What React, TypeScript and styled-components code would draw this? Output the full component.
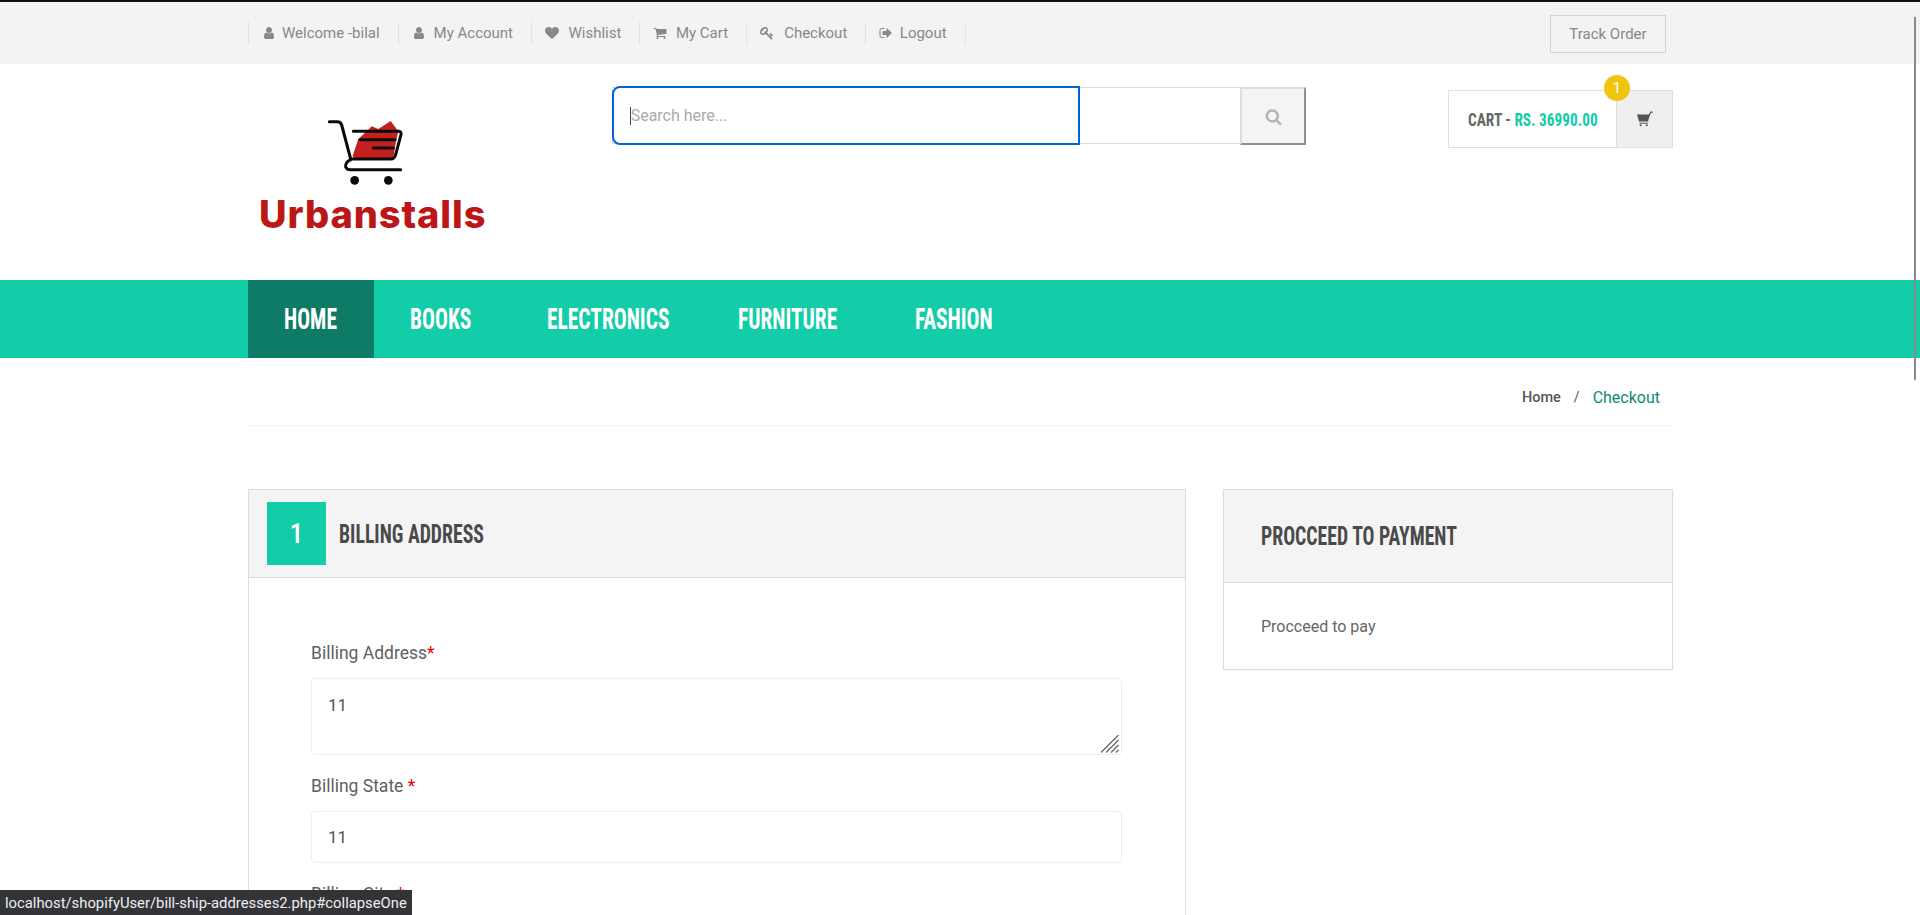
import styled, { createGlobalStyle } from "styled-components";

const GlobalStyle = createGlobalStyle`
  html, body {
    margin: 0;
    padding: 0;
    height: 915px;
    overflow: hidden;
    background: #fff;
    font-family: Roboto, "Liberation Sans", sans-serif;
    color: #555;
  }
  * { box-sizing: border-box; }
`;

const headingFont = `"Roboto Condensed", Roboto, "Liberation Sans", sans-serif`;

const Page = styled.div`
  position: relative;
  height: 915px;
  overflow: hidden;
  border-top: 2px solid #111;
`;

const Container = styled.div`
  width: 1425px;
  margin-left: 248px;
`;

// the heading face of the original is much narrower than anything installed
const Squeeze = styled.span<{ $x: number }>`
  display: inline-block;
  transform: scaleX(${(p) => p.$x});
  transform-origin: left center;
  white-space: nowrap;
`;

const TopBar = styled.div`
  height: 62px;
  background: #f3f3f3;
`;

const TopInner = styled(Container)`
  display: flex;
  align-items: center;
  justify-content: space-between;
  height: 100%;
  padding-right: 7px;
`;

const TopLinks = styled.ul`
  display: flex;
  list-style: none;
  margin: 0;
  padding: 0;
  border-right: 1px solid #e2e2e2;
`;

const TopLink = styled.li<{ $gap: number }>`
  display: flex;
  align-items: center;
  gap: ${(p) => p.$gap}px;
  height: 23px;
  padding: 0 18px 0 13px;
  border-left: 1px solid #e2e2e2;
  font-size: 15px;
  color: #888;
`;

const Glyph = styled.svg<{ $size?: number }>`
  width: ${(p) => p.$size || 14}px;
  height: ${(p) => p.$size || 14}px;
  flex: none;
  fill: currentColor;
`;

const TrackButton = styled.a`
  display: flex;
  align-items: center;
  justify-content: center;
  width: 116px;
  height: 38px;
  margin-top: 2px;
  border: 1px solid #d4d4d4;
  font-size: 15px;
  color: #888;
`;

const Header = styled(Container)`
  display: flex;
  height: 216px;
  align-items: flex-start;
`;

const Logo = styled.div`
  width: 364px;
  padding: 54px 0 0 11px;
  display: flex;
  flex-direction: column;
  align-items: flex-start;
`;

const LogoMark = styled.svg`
  display: block;
  width: 80px;
  height: 68px;
  margin-left: 66px;
`;

const LogoText = styled.div`
  margin-top: 8px;
  font-family: Inter, "Open Sans", sans-serif;
  font-weight: 800;
  font-size: 38px;
  line-height: 40px;
  letter-spacing: 0.9px;
  color: #bc1717;
`;

const SearchForm = styled.form`
  display: flex;
  width: 695px;
  height: 60px;
  margin-top: 22px;
`;

const SearchBox = styled.div`
  position: relative;
  flex: 1;
  height: 57px;
  margin-top: 1px;
  border: 1px solid #ddd;
  border-right: none;
`;

const FocusedField = styled.div`
  position: absolute;
  left: -1px;
  top: -2px;
  width: 468px;
  height: 59px;
  display: flex;
  align-items: center;
  padding-left: 16px;
  border: 2px solid #0060df;
  border-radius: 8px 0 0 8px;
  background: #fff;
  font-size: 16px;
  color: #aaa;
`;

const Caret = styled.span`
  width: 1px;
  height: 18px;
  background: #444;
`;

const SearchButton = styled.div`
  display: flex;
  align-items: center;
  justify-content: center;
  width: 66px;
  height: 58px;
  margin-top: 1px;
  background: #f4f4f4;
  border-style: solid;
  border-width: 2px;
  border-color: #ddd #8f8f8f #8f8f8f #ddd;
  color: #b4b4b4;
`;

const CartBox = styled.div`
  position: relative;
  display: flex;
  width: 225px;
  height: 58px;
  margin: 26px 0 0 142px;
  border: 1px solid #e0e0e0;
`;

const CartLabel = styled.div`
  flex: 1;
  min-width: 0;
  display: flex;
  align-items: center;
  padding-left: 19px;
  font-family: ${headingFont};
  font-weight: 700;
  font-size: 18px;
  color: #666;
`;

const CartPrice = styled.span`
  color: #13cca8;
`;

const CartIcon = styled.div`
  display: flex;
  align-items: center;
  justify-content: center;
  flex: none;
  width: 56px;
  background: #efefef;
  border-left: 1px solid #e0e0e0;
  color: #555;
`;

const CartBadge = styled.span`
  position: absolute;
  right: 42px;
  top: -16px;
  width: 26px;
  height: 26px;
  border-radius: 50%;
  background: #f1c40f;
  color: #fff;
  font-size: 15px;
  line-height: 26px;
  text-align: center;
`;

const NavBar = styled.nav`
  height: 78px;
  background: #13cca8;
`;

const NavInner = styled(Container)`
  display: flex;
  height: 100%;
`;

const NavItem = styled.a<{ $active?: boolean; $width: number }>`
  display: flex;
  align-items: center;
  width: ${(p) => p.$width}px;
  padding-left: 36px;
  background: ${(p) => (p.$active ? "#0d7b65" : "transparent")};
  font-family: ${headingFont};
  font-weight: 700;
  font-size: 29px;
  color: #fff;
`;

const Breadcrumb = styled(Container)`
  display: flex;
  justify-content: flex-end;
  align-items: center;
  gap: 13px;
  height: 68px;
  padding: 11px 13px 0 0;
  border-bottom: 1px solid #f1f1f1;
  font-size: 14px;
`;

const CrumbHome = styled.span`
  font-size: 14.5px;
  font-weight: 500;
  color: #555;
`;

const CrumbCurrent = styled.span`
  font-size: 16px;
  color: #0d8a72;
`;

const Columns = styled(Container)`
  display: flex;
  align-items: flex-start;
  justify-content: space-between;
  margin-top: 63px;
`;

const BillingCard = styled.section`
  width: 938px;
  border: 1px solid #ddd;
  padding-bottom: 200px;
`;

const BillingHead = styled.div`
  display: flex;
  align-items: center;
  gap: 13px;
  height: 88px;
  padding-left: 18px;
  background: #f4f4f4;
  border-bottom: 1px solid #ddd;
`;

const StepNumber = styled.span`
  display: flex;
  align-items: center;
  justify-content: center;
  width: 59px;
  height: 63px;
  background: #13cca8;
  color: #fff;
  font-family: ${headingFont};
  font-weight: 500;
  font-size: 27px;
`;

const CardTitle = styled.h3`
  margin: 0;
  font-family: ${headingFont};
  font-weight: 700;
  font-size: 26px;
  color: #4a4a4a;
`;

const BillingBody = styled.div`
  padding: 63px 63px 0 62px;
`;

const Field = styled.div`
  margin-bottom: 19px;
`;

const Label = styled.label`
  display: block;
  margin-bottom: 13px;
  font-size: 17.5px;
  line-height: 24px;
  color: #5f5f5f;
`;

const Required = styled.span`
  color: #e00;
`;

const AreaWrap = styled.div`
  position: relative;
`;

const TextArea = styled.textarea`
  display: block;
  width: 100%;
  height: 77px;
  padding: 16px 16px;
  border: 1px solid #eee;
  border-radius: 4px;
  outline: none;
  resize: none;
  font-family: Roboto, sans-serif;
  font-size: 17px;
  color: #555;
`;

const ResizeGrip = styled.svg`
  position: absolute;
  right: 3px;
  bottom: 2px;
  width: 18px;
  height: 18px;
`;

const TextInput = styled.input`
  display: block;
  width: 100%;
  height: 52px;
  padding: 0 16px;
  border: 1px solid #eee;
  border-radius: 4px;
  outline: none;
  font-family: Roboto, sans-serif;
  font-size: 17px;
  color: #555;
`;

const PaymentCard = styled.aside`
  width: 450px;
  border: 1px solid #ddd;
  box-shadow: 0 1px 2px rgba(0, 0, 0, 0.06);
`;

const PaymentHead = styled.div`
  display: flex;
  align-items: center;
  height: 93px;
  padding-left: 37px;
  background: #f4f4f4;
  border-bottom: 1px solid #ddd;
`;

const PaymentBody = styled.div`
  display: flex;
  align-items: center;
  height: 86px;
  padding-left: 37px;
  font-size: 16px;
  color: #666;
`;

const StatusBubble = styled.div`
  position: absolute;
  left: 0;
  bottom: 0;
  height: 25px;
  padding: 0 5px;
  display: flex;
  align-items: center;
  background: #333438;
  color: #eee;
  font-size: 14.8px;
`;

const ScrollThumb = styled.div`
  position: absolute;
  right: 4px;
  top: 15px;
  width: 2px;
  height: 363px;
  background: #8a8a8a;
`;

const paths = {
  user: "M1536 1399q0 109-62.5 187t-150.5 78h-854q-88 0-150.5-78t-62.5-187q0-85 8.5-160.5t31.5-152 58.5-131 94-89 134.5-34.5q131 128 313 128t313-128q76 0 134.5 34.5t94 89 58.5 131 31.5 152 8.5 160.5zm-256-887q0 159-112.5 271.5t-271.5 112.5-271.5-112.5-112.5-271.5 112.5-271.5 271.5-112.5 271.5 112.5 112.5 271.5z",
  heart: "M896 1664q-26 0-44-18l-624-602q-10-8-27.5-26t-55.5-65.5-68-97.5-53.5-121-23.5-138q0-220 127-344t351-124q62 0 126.5 21.5t120 58 95.5 68.5 76 68q36-36 76-68t95.5-68.5 120-58 126.5-21.5q224 0 351 124t127 344q0 221-229 450l-623 600q-18 18-44 18z",
  cart: "M704 1536q0 52-38 90t-90 38-90-38-38-90 38-90 90-38 90 38 38 90zm896 0q0 52-38 90t-90 38-90-38-38-90 38-90 90-38 90 38 38 90zm128-1088v512q0 24-16.5 42.5t-40.5 21.5l-1044 122q13 60 13 70 0 16-24 64h920q26 0 45 19t19 45-19 45-45 19h-1024q-26 0-45-19t-19-45q0-11 8-31.5t16-36 21.5-40 15.5-29.5l-177-823h-204q-26 0-45-19t-19-45 19-45 45-19h256q16 0 28.5 6.5t19.5 15.5 13 24.5 8 26 5.5 29.5 4.5 26h1201q26 0 45 19t19 45z",
  key: "M832 512q0-80-56-136t-136-56-136 56-56 136q0 42 19 83-41-19-83-19-80 0-136 56t-56 136 56 136 136 56 136-56 56-136q0-42-19-83 41 19 83 19 80 0 136-56t56-136zm851 704q0 17-49 66t-66 49q-9 0-28.5-16t-36.5-33-38.5-40-24.5-26l-96 96 220 220q28 28 28 68 0 42-39 81t-81 39q-40 0-68-28l-671-671q-176 131-365 131-163 0-265.5-102.5t-102.5-265.5q0-160 95-313t248-248 313-95q163 0 265.5 102.5t102.5 265.5q0 189-131 365l355 355 96-96q-3-3-26-24.5t-40-38.5-33-36.5-16-28.5q0-17 49-66t66-49q13 0 23 10 6 6 46 44.5t82 79.5 86.5 86 73 78 28.5 41z",
  signOut: "M704 1440q0 4 1 20t.5 26.5-3 23.5-10 19.5-20.5 6.5h-320q-119 0-203.5-84.5t-84.5-203.5v-704q0-119 84.5-203.5t203.5-84.5h320q13 0 22.5 9.5t9.5 22.5q0 4 1 20t.5 26.5-3 23.5-10 19.5-20.5 6.5h-320q-66 0-113 47t-47 113v704q0 66 47 113t113 47h312l11.5 1 11.5 3 8 5.5 7 9 2 13.5zm928-544q0 26-19 45l-544 544q-19 19-45 19t-45-19-19-45v-288h-448q-26 0-45-19t-19-45v-384q0-26 19-45t45-19h448v-288q0-26 19-45t45-19 45 19l544 544q19 19 19 45z",
  search: "M1216 832q0-185-131.5-316.5t-316.5-131.5-316.5 131.5-131.5 316.5 131.5 316.5 316.5 131.5 316.5-131.5 131.5-316.5zm512 832q0 52-38 90t-90 38q-54 0-90-38l-343-342q-179 124-399 124-143 0-273.5-55.5t-225-150-150-225-55.5-273.5 55.5-273.5 150-225 225-150 273.5-55.5 273.5 55.5 225 150 150 225 55.5 273.5q0 220-124 399l343 343q37 37 37 90z",
};

const links = [
  { icon: paths.user, text: "Welcome -bilal", gap: 6 },
  { icon: paths.user, text: "My Account", gap: 8 },
  { icon: paths.heart, text: "Wishlist", gap: 9.5 },
  { icon: paths.cart, text: "My Cart", gap: 8.5 },
  { icon: paths.key, text: "Checkout", gap: 10 },
  { icon: paths.signOut, text: "Logout", gap: 6.5 },
];

const navItems = [
  { text: "HOME", width: 126 },
  { text: "BOOKS", width: 137 },
  { text: "ELECTRONICS", width: 191 },
  { text: "FURNITURE", width: 177 },
  { text: "FASHION", width: 152 },
];

const App = () => {
  return (
    <Page>
      <GlobalStyle />
      <TopBar>
        <TopInner>
          <TopLinks>
            {links.map((l) => (
              <TopLink key={l.text} $gap={l.gap}>
                <Glyph viewBox="0 0 1792 1792">
                  <path d={l.icon} />
                </Glyph>
                {l.text}
              </TopLink>
            ))}
          </TopLinks>
          <TrackButton>Track Order</TrackButton>
        </TopInner>
      </TopBar>

      <Header>
        <Logo>
          <LogoMark viewBox="285 115 240 204">
            <path d="M368 228 L385 178 L415 150 L425 140 L445 148 L482 124 L505 155 L498 185 L490 235 L372 235 Z" fill="#c42020" />
            <g fill="none" stroke="#0a0a0a" strokeWidth="9" strokeLinecap="round" strokeLinejoin="round">
              <path d="M298 126 H322 Q332 126 335 136 L362 238" />
              <path d="M370 155 H505 Q515 155 513 165 L497 225 Q494 238 482 238 H362" />
              <path d="M362 240 Q345 248 347 262 Q350 270 360 270 H512" />
              <path d="M390 180 H495" />
              <path d="M430 205 H490" />
            </g>
            <circle cx="374" cy="302" r="13" fill="#0a0a0a" />
            <circle cx="475" cy="302" r="13" fill="#0a0a0a" />
          </LogoMark>
          <LogoText>Urbanstalls</LogoText>
        </Logo>
        <SearchForm>
          <SearchBox>
            <FocusedField>
              <Caret />
              Search here...
            </FocusedField>
          </SearchBox>
          <SearchButton>
            <Glyph viewBox="0 0 1792 1792" $size={17}>
              <path d={paths.search} />
            </Glyph>
          </SearchButton>
        </SearchForm>
        <CartBox>
          <CartLabel>
            <Squeeze $x={0.85}>
              CART - <CartPrice>RS. 36990.00</CartPrice>
            </Squeeze>
          </CartLabel>
          <CartIcon>
            <Glyph viewBox="0 0 16 15" $size={16}>
              <path d="M0 3 H13 L11 10 H2 Z" />
              <path d="M12 4 L13.8 0.6 H15.8" fill="none" stroke="currentColor" strokeWidth="1.2" />
              <path d="M2.5 11.7 H10.8" fill="none" stroke="currentColor" strokeWidth="1" />
              <circle cx="3.6" cy="13.8" r="1" />
              <circle cx="9.8" cy="13.8" r="1" />
            </Glyph>
          </CartIcon>
          <CartBadge>1</CartBadge>
        </CartBox>
      </Header>

      <NavBar>
        <NavInner>
          {navItems.map((n, i) => (
            <NavItem key={n.text} $active={i === 0} $width={n.width}>
              <Squeeze $x={0.74}>{n.text}</Squeeze>
            </NavItem>
          ))}
        </NavInner>
      </NavBar>

      <Breadcrumb>
        <CrumbHome>Home</CrumbHome>
        <span>/</span>
        <CrumbCurrent>Checkout</CrumbCurrent>
      </Breadcrumb>

      <Columns>
        <BillingCard>
          <BillingHead>
            <StepNumber>1</StepNumber>
            <CardTitle>
              <Squeeze $x={0.76}>BILLING ADDRESS</Squeeze>
            </CardTitle>
          </BillingHead>
          <BillingBody>
            <Field>
              <Label>
                Billing Address<Required>*</Required>
              </Label>
              <AreaWrap>
                <TextArea defaultValue="11" />
                <ResizeGrip viewBox="0 0 18 18">
                  <path d="M0 17.5 L17.5 0 M5 17.5 L17.5 5 M10 17.5 L17.5 10 M15 17.5 L17.5 15" stroke="#666" strokeWidth="1.3" fill="none" />
                </ResizeGrip>
              </AreaWrap>
            </Field>
            <Field>
              <Label>
                Billing State <Required>*</Required>
              </Label>
              <TextInput defaultValue="11" />
            </Field>
            <Field>
              <Label>
                Billing City <Required>*</Required>
              </Label>
              <TextInput defaultValue="11" />
            </Field>
          </BillingBody>
        </BillingCard>
        <PaymentCard>
          <PaymentHead>
            <CardTitle>
              <Squeeze $x={0.76}>PROCCEED TO PAYMENT</Squeeze>
            </CardTitle>
          </PaymentHead>
          <PaymentBody>Procceed to pay</PaymentBody>
        </PaymentCard>
      </Columns>

      <StatusBubble>localhost/shopifyUser/bill-ship-addresses2.php#collapseOne</StatusBubble>
      <ScrollThumb />
    </Page>
  );
};

export default App;
